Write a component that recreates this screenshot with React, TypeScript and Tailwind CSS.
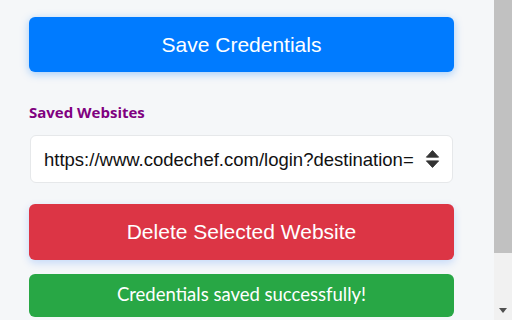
export default function App() {
  return (
    <div className="flex h-[320px] w-[512px] overflow-hidden bg-[#f5f7f9]">
      <div className="flex w-[494px] flex-col pl-[29px] pt-[17px]" style={{ fontFamily: '"Liberation Sans", Arial, sans-serif' }}>
        <button className="h-[55px] w-[425px] rounded-md bg-[#007bff] text-[21px] text-white shadow-[0_2px_8px_rgba(0,123,255,0.35)]">
          Save Credentials
        </button>

        <div className="mt-[29px] text-[15px] font-bold text-[#800080]" style={{ fontFamily: '"Open Sans", "Noto Sans", sans-serif' }}>
          Saved Websites
        </div>

        <div className="mt-[11px] ml-px flex h-[48px] w-[423px] items-center justify-between rounded-md border border-[#e6e8ea] bg-white pl-[13px] pr-[12px]">
          <span className="truncate pt-[2px] text-[18.5px] text-[#111]">https://www.codechef.com/login?destination=</span>
          <svg width="15" height="22" viewBox="0 0 16 22" className="ml-2 shrink-0">
            <path d="M8 2 L14.5 9 L1.5 9 Z" fill="#333" stroke="#333" strokeLinejoin="round" />
            <path d="M1.5 13 L14.5 13 L8 20 Z" fill="#333" stroke="#333" strokeLinejoin="round" />
          </svg>
        </div>

        <button className="mt-[21px] h-[56px] w-[425px] rounded-md bg-[#dc3545] text-[21px] text-white shadow-[0_3px_8px_rgba(0,100,255,0.2)]">
          Delete Selected Website
        </button>

        <div className="mt-[14px] flex h-[43px] w-[425px] items-center justify-center rounded-md bg-[#28a745] text-[18.5px] text-white" style={{ fontFamily: 'Lato, "Open Sans", sans-serif' }}>
          Credentials saved successfully!
        </div>
      </div>

      <div className="flex w-[18px] flex-col bg-[#f1f1f1]">
        <div className="h-[253px] bg-[#c1c1c1]" />
        <div className="flex-1" />
        <div className="mb-[6px] flex justify-center">
          <svg width="8" height="6" viewBox="0 0 8 6">
            <path d="M0 0 L8 0 L4 5 Z" fill="#505050" />
          </svg>
        </div>
      </div>
    </div>
  );
}
